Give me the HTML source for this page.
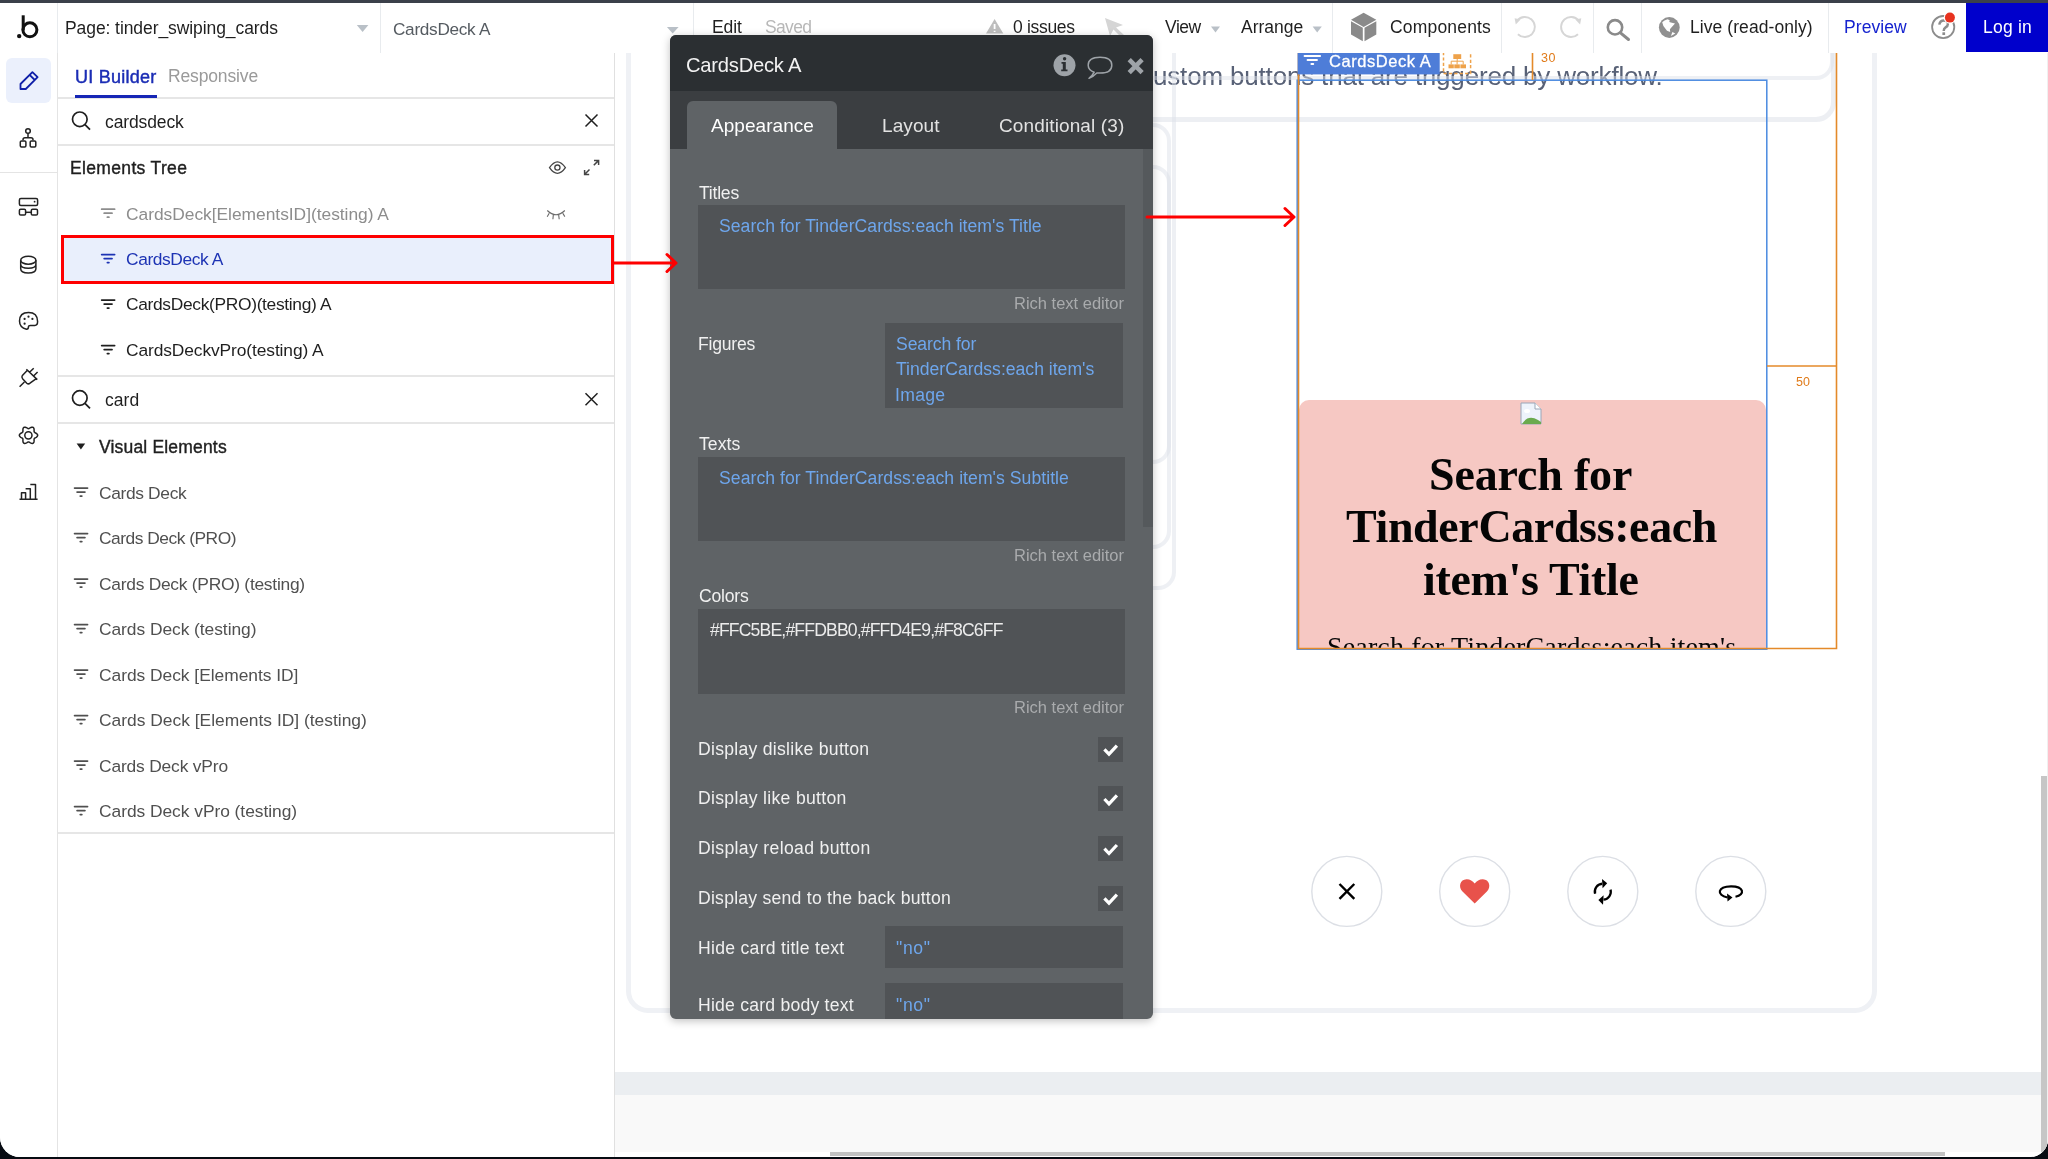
<!DOCTYPE html>
<html><head><meta charset="utf-8">
<style>
html,body{margin:0;padding:0;}
body{width:2048px;height:1159px;overflow:hidden;background:#070b12;position:relative;font-family:"Liberation Sans",sans-serif;}
.a{position:absolute;}
.t{position:absolute;white-space:pre;font-family:"Liberation Sans",sans-serif;will-change:transform;}
svg{position:absolute;left:0;top:0;overflow:visible;}
</style></head><body>
<div class="a" id="win" style="left:0;top:0;width:2048px;height:1157px;background:#fff;border-radius:0 0 18px 20px;overflow:hidden;">
  <!-- top dark strip -->
  <div class="a" style="left:0;top:0;width:2048px;height:3px;background:#3b404a;"></div>

  <!-- ============ CANVAS ============ -->
  <div class="a" style="left:615px;top:53px;width:1433px;height:1104px;background:#ffffff;overflow:hidden;">
   <div class="a" style="left:-615px;top:-53px;width:2048px;height:1159px;">
  <!-- big container -->
  <div class="a" style="left:626px;top:10px;width:1251px;height:1003px;box-sizing:border-box;border:5px solid #eff1f5;border-radius:22px;"></div>
  <!-- band & footer -->
  <div class="a" style="left:615px;top:1072px;width:1426px;height:23px;background:#ebeef1;"></div>
  <div class="a" style="left:615px;top:1095px;width:1426px;height:57px;background:#f9f9f9;"></div>
  <div class="a" style="left:830px;top:1152px;width:1115px;height:4px;background:#c2c2c2;"></div>
  <div class="a" style="left:2041px;top:776px;width:6px;height:376px;background:#c6c6c6;"></div>
  <div class="a" style="left:2047px;top:53px;width:1px;height:1104px;background:#f0f0f0;"></div>
<div class="t" style="left:1152.50px;top:63.00px;font-size:26px;line-height:26px;color:#586176;letter-spacing:-0.174px;">ustom buttons that are triggered by workflow.</div>
<div class="t" style="left:990.61px;top:63.00px;font-size:26px;line-height:26px;color:#586176;letter-spacing:0.000px;">You can use c</div>
  <!-- inner containers -->
  <div class="a" style="left:700px;top:-100px;width:1136px;height:222px;box-sizing:border-box;border:5px solid rgba(222,226,234,0.55);border-radius:20px;"></div>
  <div class="a" style="left:700px;top:-100px;width:1134px;height:179.5px;box-sizing:border-box;border:4px solid rgba(222,226,234,0.5);border-radius:18px;"></div>
  <div class="a" style="left:700px;top:20px;width:476px;height:570px;box-sizing:border-box;border:4px solid rgba(222,226,234,0.5);border-radius:18px;"></div>
  <div class="a" style="left:700px;top:123px;width:471px;height:341px;box-sizing:border-box;border:4px solid rgba(222,226,234,0.5);border-radius:18px;"></div>
  <div class="a" style="left:700px;top:165px;width:471px;height:384px;box-sizing:border-box;border:4px solid rgba(222,226,234,0.5);border-radius:18px;"></div>
   </div>
  </div>
  <!-- card -->
  <div class="a" style="left:1299px;top:400px;width:467px;height:249px;background:#f6c8c3;border-radius:10px 10px 0 0;overflow:hidden;">
  </div>
  <div class="a" style="left:1299px;top:400px;width:467px;height:249px;overflow:hidden;">
    <div class="a" style="left:-1299px;top:-400px;width:2048px;height:1159px;">
<div class="t" style="left:1429.20px;top:452.00px;font-size:46px;line-height:46px;color:#050505;letter-spacing:-0.167px;font-weight:700;font-family:'Liberation Serif',serif;">Search for</div>
<div class="t" style="left:1346.20px;top:504.00px;font-size:46px;line-height:46px;color:#050505;letter-spacing:-0.375px;font-weight:700;font-family:'Liberation Serif',serif;">TinderCardss:each</div>
<div class="t" style="left:1423.00px;top:557.00px;font-size:46px;line-height:46px;color:#050505;letter-spacing:-0.313px;font-weight:700;font-family:'Liberation Serif',serif;">item&#x27;s Title</div>
<div class="t" style="left:1326.80px;top:633.00px;font-size:28px;line-height:28px;color:#050505;letter-spacing:0.151px;font-family:'Liberation Serif',serif;">Search for TinderCardss:each item&#x27;s</div>
    </div>
  </div>
  <svg width="2048" height="1159">
    <!-- broken image icon -->
    <g transform="translate(1520,402)">
      <path d="M1,1 h14 l6,6 v15 h-20 z" fill="#eef3fb" stroke="#9aa6b8" stroke-width="1"/>
      <path d="M15,1 v6 h6" fill="#fff" stroke="#9aa6b8" stroke-width="1"/>
      <path d="M2,22 q6,-10 16,-4 l3,2 v2 z" fill="#6aaa4e"/>
      <ellipse cx="7" cy="9" rx="3" ry="2" fill="#fff"/>
    </g>
    <!-- selection & margin lines -->
    <rect x="1297.2" y="80.2" width="469.6" height="569" fill="none" stroke="#4a8ae0" stroke-width="1.5"/>
    <path d="M1298.5,53 V648.5 H1836.5 V40" fill="none" stroke="#e48a2a" stroke-width="1.6"/>
    <path d="M1767,366 H1836.5" fill="none" stroke="#e48a2a" stroke-width="1.6"/>
    <path d="M1532.5,53 V80" fill="none" stroke="#e48a2a" stroke-width="1.6"/>
    <path d="M1443.5,52 V73.6 H1470.6 V52" fill="none" stroke="#eea24a" stroke-width="1.5" stroke-dasharray="3.2,2.2"/>
    <g fill="#eea24a">
      <rect x="1453.3" y="54.2" width="7.9" height="4.8"/>
      <rect x="1448.5" y="64.4" width="5.3" height="3.9"/><rect x="1454.3" y="64.4" width="5.5" height="3.9"/><rect x="1460.4" y="64.4" width="5.6" height="3.9"/>
    </g>
    <path d="M1457.2,59 V61.2 M1451.2,64.4 V61.2 H1463.2 V64.4 M1457.1,61.2 V64.4" fill="none" stroke="#eea24a" stroke-width="1"/>
    <!-- label tab -->
    <rect x="1297.6" y="53" width="142.1" height="21.4" fill="#4e7dd8"/>
    <path d="M1304.58,56.10 H1320.06 M1307.58,60.10 H1316.94 M1311.42,64.10 H1313.22" stroke="#fff" stroke-width="2" stroke-linecap="round" fill="none"/>
    <!-- buttons -->
    <g fill="#fff" stroke="#dcdfe5" stroke-width="1.4">
      <circle cx="1346.8" cy="891.4" r="35"/>
      <circle cx="1474.7" cy="891.4" r="35"/>
      <circle cx="1602.8" cy="891.4" r="35"/>
      <circle cx="1730.8" cy="891.4" r="35"/>
    </g>
    <path d="M1339.5,884 L1354.3,898.8 M1354.3,884 L1339.5,898.8" stroke="#000" stroke-width="2.4"/>
    <path d="M1474.7,903.6 L1462.5,891.5 C1458,887 1460,879.5 1466.5,879.3 C1470,879.2 1472.5,881 1474.7,883.5 C1476.9,881 1479.4,879.2 1482.9,879.3 C1489.4,879.5 1491.4,887 1486.9,891.5 Z" fill="#e8524b"/>
    <g fill="none" stroke="#000" stroke-width="2.3">
      <path d="M1595.07,893.77 A8,8 0 0 1 1602.1,883.73"/>
      <path d="M1610.53,889.63 A8,8 0 0 1 1603.5,899.67"/>
    </g>
    <path d="M1607.2,883.3 L1602,878.9 L1602.6,888.2 Z" fill="#000"/>
    <path d="M1598.4,900.1 L1603.6,895.3 L1603.0,904.7 Z" fill="#000"/>
    <g fill="none" stroke="#000" stroke-width="2.2">
      <path d="M1727.5,897.5 C1716,895 1717.5,886.5 1731,886.3 C1744,886.2 1745.5,894.5 1735.5,896.8"/>
    </g>
    <path d="M1727,893.5 L1732.5,897.5 L1727.5,901.5 Z" fill="#000"/>
  </svg>
<div class="t" style="left:1328.80px;top:53.00px;font-size:16.5px;line-height:16.5px;color:#ffffff;letter-spacing:0.541px;-webkit-text-stroke:0.3px #fff;">CardsDeck A</div>
<div class="t" style="left:1540.50px;top:52.00px;font-size:12.5px;line-height:12.5px;color:#e07b1a;letter-spacing:0.548px;">30</div>
<div class="t" style="left:1796.00px;top:376.00px;font-size:12.5px;line-height:12.5px;color:#e07b1a;letter-spacing:0.048px;">50</div>

  <!-- ============ LEFT RAIL ============ -->
  <div class="a" style="left:0;top:53px;width:57px;height:1104px;background:#fff;border-right:1px solid #e4e4e4;"></div>
  <div class="a" style="left:0;top:172px;width:57px;height:1px;background:#e4e4e4;"></div>
  <div class="a" style="left:6px;top:58px;width:45px;height:45px;background:#ebf0fc;border-radius:6px;"></div>
  <svg width="60" height="520">
    <g fill="none" stroke="#0f1fa8" stroke-width="1.8" stroke-linejoin="round">
      <path d="M20.5,89 L20.5,84 L32.4,72.1 L37.6,77.2 L25.8,89 Z M29.6,74.8 L34.8,80"/>
    </g>
    <g fill="none" stroke="#222" stroke-width="1.5" stroke-linejoin="round">
      <circle cx="28" cy="131" r="2.3"/>
      <path d="M28,133.3 V137.7 M23,140.3 V139.7 Q23,137.7 25,137.7 H31 Q33,137.7 33,139.7 V140.3"/>
      <rect x="20.3" y="140.9" width="5.6" height="6" rx="1.2"/>
      <rect x="30.2" y="140.9" width="5.6" height="6" rx="1.2"/>
      <rect x="19.4" y="198.4" width="18.2" height="7.0" rx="1.5"/>
      <rect x="19.4" y="209.3" width="6.2" height="5.8" rx="1.3"/>
      <rect x="31.3" y="209.3" width="6.2" height="5.8" rx="1.3"/>
      <path d="M25.6,212.3 H31.3"/>
      <ellipse cx="28.3" cy="260.2" rx="7.6" ry="4"/>
      <path d="M20.7,260.2 V268.8 Q20.7,273 28.3,273 Q35.9,273 35.9,268.8 V260.2 M20.7,264.3 Q20.7,268.3 28.3,268.3 Q35.9,268.3 35.9,264.3"/>
      <path d="M33.2,325.4 H34.8 Q37.6,325.4 37.6,321.5 Q37.6,312.4 28.5,312.4 Q19.5,312.4 19.5,321 Q19.5,327.5 26.5,329.3 Q28.5,329.3 28.5,326.5 Q28.5,325.4 30.3,325.4 Z"/>
<path d="M26.4,369.2 L37.3,379.6 M27.4,370.2 L22.4,375.4 Q21.2,377.2 22.6,378.8 L26.8,383.2 Q28.4,384.6 30,383.2 L36.3,378.6 M29.8,372 L33.7,368.2 M33.8,375.8 L37.6,372 M24.4,382 L19.6,386.8"/>
<path d="M37.65,435.30 L37.58,435.78 L37.36,436.23 L37.03,436.65 L36.61,437.02 L36.13,437.34 L35.65,437.62 L35.19,437.87 L34.79,438.10 L34.48,438.35 L34.26,438.62 L34.13,438.96 L34.07,439.35 L34.07,439.81 L34.08,440.33 L34.09,440.89 L34.04,441.46 L33.93,442.01 L33.74,442.51 L33.45,442.92 L33.08,443.22 L32.63,443.40 L32.12,443.44 L31.59,443.36 L31.06,443.18 L30.54,442.93 L30.06,442.65 L29.62,442.38 L29.22,442.15 L28.85,442.00 L28.50,441.95 L28.15,442.00 L27.78,442.15 L27.38,442.38 L26.94,442.65 L26.46,442.93 L25.94,443.18 L25.41,443.36 L24.88,443.44 L24.37,443.40 L23.93,443.22 L23.55,442.92 L23.26,442.51 L23.07,442.01 L22.96,441.46 L22.91,440.89 L22.92,440.33 L22.93,439.81 L22.93,439.35 L22.87,438.96 L22.74,438.62 L22.52,438.35 L22.21,438.10 L21.81,437.87 L21.35,437.62 L20.87,437.34 L20.39,437.02 L19.97,436.65 L19.64,436.23 L19.42,435.78 L19.35,435.30 L19.42,434.82 L19.64,434.37 L19.97,433.95 L20.39,433.58 L20.87,433.26 L21.35,432.98 L21.81,432.73 L22.21,432.50 L22.52,432.25 L22.74,431.98 L22.87,431.64 L22.93,431.25 L22.93,430.79 L22.92,430.27 L22.91,429.71 L22.96,429.14 L23.07,428.59 L23.26,428.09 L23.55,427.68 L23.92,427.38 L24.37,427.20 L24.88,427.16 L25.41,427.24 L25.94,427.42 L26.46,427.67 L26.94,427.95 L27.38,428.22 L27.78,428.45 L28.15,428.60 L28.50,428.65 L28.85,428.60 L29.22,428.45 L29.62,428.22 L30.06,427.95 L30.54,427.67 L31.06,427.42 L31.59,427.24 L32.12,427.16 L32.63,427.20 L33.08,427.38 L33.45,427.68 L33.74,428.09 L33.93,428.59 L34.04,429.14 L34.09,429.71 L34.08,430.27 L34.07,430.79 L34.07,431.25 L34.13,431.64 L34.26,431.98 L34.48,432.25 L34.79,432.50 L35.19,432.73 L35.65,432.98 L36.13,433.26 L36.61,433.58 L37.03,433.95 L37.36,434.37 L37.58,434.82 L37.65,435.30 Z"/>
      <circle cx="28.4" cy="435.3" r="3.6"/>
      <path d="M19.5,499.3 H37.6 M21.5,499.3 V492.7 H25.6 V499.3 M25.6,488.8 H30.3 V499.3 M30.3,484.5 H35.5 V499.3"/>
    </g>
    <g fill="#222">
      <circle cx="24.6" cy="318.9" r="1.1"/><circle cx="28.5" cy="316.7" r="1.1"/><circle cx="32.4" cy="318.9" r="1.1"/><circle cx="24.6" cy="323.7" r="1.1"/>
      <circle cx="34.6" cy="201.7" r="0.9"/>
    </g>
  </svg>

  <!-- ============ LEFT PANEL ============ -->
  <div class="a" style="left:58px;top:53px;width:556px;height:1104px;background:#fff;border-right:1px solid #e0e0e0;"></div>
  <div class="a" style="left:58px;top:97px;width:556px;height:2px;background:#e6e6e6;"></div>
  <div class="a" style="left:75px;top:95px;width:82px;height:3px;background:#1626b5;"></div>
  <div class="a" style="left:58px;top:144px;width:556px;height:2px;background:#e6e6e6;"></div>
  <div class="a" style="left:58px;top:375px;width:556px;height:2px;background:#e6e6e6;"></div>
  <div class="a" style="left:58px;top:422px;width:556px;height:2px;background:#e6e6e6;"></div>
  <div class="a" style="left:58px;top:832px;width:556px;height:2px;background:#e6e6e6;"></div>
  <!-- selected row -->
  <div class="a" style="left:61px;top:235px;width:547px;height:43px;background:#e9effc;border:3px solid #fe0000;"></div>
  <svg width="620" height="840">
    <g fill="none" stroke="#1f1f1f" stroke-width="1.7">
      <circle cx="79.8" cy="119.3" r="7.3"/><path d="M85,124.6 L90,129.6"/>
      <path d="M585.5,114.5 L597.5,126.5 M597.5,114.5 L585.5,126.5" stroke-width="1.5"/>
      <circle cx="79.8" cy="398" r="7.3"/><path d="M85,403.3 L90,408.3"/>
      <path d="M585.5,393.2 L597.5,405.2 M597.5,393.2 L585.5,405.2" stroke-width="1.5"/>
    </g>
    <g fill="none" stroke="#444" stroke-width="1.3">
      <path d="M549.5,167.6 Q557.4,156 565.4,167.6 Q557.4,179 549.5,167.6 Z"/>
      <circle cx="557.4" cy="167.6" r="2.6"/>
      <path d="M589.5,169.5 L584.8,174.2 M584.6,170 V174.6 H589.2 M593.8,165.2 L598.4,160.6 M594,160.4 H598.6 V165" stroke-width="1.5"/>
    </g>
    <g fill="none" stroke="#6a6a6a" stroke-width="1.1">
      <path d="M547.3,210.5 Q556,219 564.8,210.5 M549.2,213.3 L547.2,216.8 M553.3,215.1 L552.9,219.3 M558.7,215.1 L559.2,219.3 M562.8,213.3 L564.8,216.6"/>
    </g>
    <path d="M76.6,443.4 H85.2 L80.9,449.4 Z" fill="#1f1f1f"/>
    <path d="M101.70,209.20 H114.60 M104.20,213.20 H112.00 M107.40,217.20 H108.90" stroke="#8d8d8d" stroke-width="1.8" stroke-linecap="round" fill="none"/>
    <path d="M101.70,254.60 H114.60 M104.20,258.60 H112.00 M107.40,262.60 H108.90" stroke="#1d33b4" stroke-width="1.8" stroke-linecap="round" fill="none"/>
    <path d="M101.70,300.10 H114.60 M104.20,304.10 H112.00 M107.40,308.10 H108.90" stroke="#1f1f1f" stroke-width="1.8" stroke-linecap="round" fill="none"/>
    <path d="M101.70,345.60 H114.60 M104.20,349.60 H112.00 M107.40,353.60 H108.90" stroke="#1f1f1f" stroke-width="1.8" stroke-linecap="round" fill="none"/>
    <path d="M74.60,488.10 H87.50 M77.10,492.10 H84.90 M80.30,496.10 H81.80" stroke="#505050" stroke-width="1.8" stroke-linecap="round" fill="none"/><path d="M74.60,533.60 H87.50 M77.10,537.60 H84.90 M80.30,541.60 H81.80" stroke="#505050" stroke-width="1.8" stroke-linecap="round" fill="none"/><path d="M74.60,579.10 H87.50 M77.10,583.10 H84.90 M80.30,587.10 H81.80" stroke="#505050" stroke-width="1.8" stroke-linecap="round" fill="none"/><path d="M74.60,624.60 H87.50 M77.10,628.60 H84.90 M80.30,632.60 H81.80" stroke="#505050" stroke-width="1.8" stroke-linecap="round" fill="none"/><path d="M74.60,670.10 H87.50 M77.10,674.10 H84.90 M80.30,678.10 H81.80" stroke="#505050" stroke-width="1.8" stroke-linecap="round" fill="none"/><path d="M74.60,715.60 H87.50 M77.10,719.60 H84.90 M80.30,723.60 H81.80" stroke="#505050" stroke-width="1.8" stroke-linecap="round" fill="none"/><path d="M74.60,761.10 H87.50 M77.10,765.10 H84.90 M80.30,769.10 H81.80" stroke="#505050" stroke-width="1.8" stroke-linecap="round" fill="none"/><path d="M74.60,806.60 H87.50 M77.10,810.60 H84.90 M80.30,814.60 H81.80" stroke="#505050" stroke-width="1.8" stroke-linecap="round" fill="none"/>
  </svg>
<div class="t" style="left:75.10px;top:68.00px;font-size:18.0px;line-height:18.0px;color:#1b2db5;letter-spacing:0.251px;-webkit-text-stroke:0.45px #1b2db5;">UI Builder</div>
<div class="t" style="left:168.30px;top:68.00px;font-size:17.5px;line-height:17.5px;color:#9a9a9a;letter-spacing:-0.145px;">Responsive</div>
<div class="t" style="left:104.80px;top:114.00px;font-size:17.5px;line-height:17.5px;color:#1f1f1f;letter-spacing:-0.114px;">cardsdeck</div>
<div class="t" style="left:69.80px;top:160.00px;font-size:17.5px;line-height:17.5px;color:#1f1f1f;letter-spacing:0.341px;-webkit-text-stroke:0.4px #1f1f1f;">Elements Tree</div>
<div class="t" style="left:126.10px;top:206.00px;font-size:17.4px;line-height:17.4px;color:#8d8d8d;letter-spacing:-0.029px;">CardsDeck[ElementsID](testing) A</div>
<div class="t" style="left:126.10px;top:251.00px;font-size:17.4px;line-height:17.4px;color:#1d33b4;letter-spacing:-0.424px;">CardsDeck A</div>
<div class="t" style="left:126.10px;top:296.00px;font-size:17.4px;line-height:17.4px;color:#1f1f1f;letter-spacing:-0.330px;">CardsDeck(PRO)(testing) A</div>
<div class="t" style="left:126.10px;top:342.00px;font-size:17.4px;line-height:17.4px;color:#1f1f1f;letter-spacing:-0.110px;">CardsDeckvPro(testing) A</div>
<div class="t" style="left:104.50px;top:392.00px;font-size:17.5px;line-height:17.5px;color:#1f1f1f;letter-spacing:0.063px;">card</div>
<div class="t" style="left:99.00px;top:439.00px;font-size:17.5px;line-height:17.5px;color:#1f1f1f;letter-spacing:0.178px;-webkit-text-stroke:0.4px #1f1f1f;">Visual Elements</div>
<div class="t" style="left:99.00px;top:485.00px;font-size:17.4px;line-height:17.4px;color:#505050;letter-spacing:-0.350px;">Cards Deck</div>
<div class="t" style="left:99.00px;top:530.00px;font-size:17.4px;line-height:17.4px;color:#505050;letter-spacing:-0.497px;">Cards Deck (PRO)</div>
<div class="t" style="left:99.00px;top:576.00px;font-size:17.4px;line-height:17.4px;color:#505050;letter-spacing:-0.260px;">Cards Deck (PRO) (testing)</div>
<div class="t" style="left:99.00px;top:621.00px;font-size:17.4px;line-height:17.4px;color:#505050;letter-spacing:-0.053px;">Cards Deck (testing)</div>
<div class="t" style="left:99.00px;top:667.00px;font-size:17.4px;line-height:17.4px;color:#505050;letter-spacing:-0.031px;">Cards Deck [Elements ID]</div>
<div class="t" style="left:99.00px;top:712.00px;font-size:17.4px;line-height:17.4px;color:#505050;letter-spacing:0.003px;">Cards Deck [Elements ID] (testing)</div>
<div class="t" style="left:99.00px;top:758.00px;font-size:17.4px;line-height:17.4px;color:#505050;letter-spacing:-0.169px;">Cards Deck vPro</div>
<div class="t" style="left:99.00px;top:803.00px;font-size:17.4px;line-height:17.4px;color:#505050;letter-spacing:-0.041px;">Cards Deck vPro (testing)</div>

  <!-- ============ TOP BAR ============ -->
  <div class="a" style="left:0;top:3px;width:2048px;height:50px;background:#fff;"></div>
  <div class="a" style="left:57px;top:3px;width:1px;height:50px;background:#e8ebee;"></div>
  <div class="a" style="left:380px;top:3px;width:1px;height:50px;background:#e8ebee;"></div>
  <div class="a" style="left:693px;top:3px;width:1px;height:50px;background:#e8ebee;"></div>
  <div class="a" style="left:1332px;top:3px;width:1px;height:50px;background:#e8ebee;"></div>
  <div class="a" style="left:1501px;top:3px;width:1px;height:50px;background:#e8ebee;"></div>
  <div class="a" style="left:1593px;top:3px;width:1px;height:50px;background:#e8ebee;"></div>
  <div class="a" style="left:1641px;top:3px;width:1px;height:50px;background:#e8ebee;"></div>
  <div class="a" style="left:1828px;top:3px;width:1px;height:50px;background:#e8ebee;"></div>
  <div class="a" style="left:1966px;top:3px;width:82px;height:49px;background:#0000cc;"></div>
  <svg width="2048" height="60">
    <!-- logo -->
    <g fill="#111">
      <circle cx="19.2" cy="36.1" r="2.2"/>
      <rect x="21.7" y="15.3" width="3" height="15"/>
    </g>
    <circle cx="29.9" cy="29.8" r="7" fill="none" stroke="#111" stroke-width="3"/>
    <g fill="#b9c0c7">
      <path d="M356.8,25 H368.4 L362.6,32 Z"/>
      <path d="M666.9,27 H678.6 L672.7,33.4 Z"/>
      <path d="M1211,26.5 H1220 L1215.5,32.5 Z"/>
      <path d="M1312.6,26.5 H1321.8 L1317.2,32.5 Z"/>
    </g>
    <!-- warning -->
    <path d="M994.6,19 L1003.3,33.6 H986 Z" fill="#bdbdbd"/>
    <path d="M994.6,24 V29 M994.6,30.8 V32" stroke="#fff" stroke-width="1.8"/>
    <!-- cursor -->
    <path d="M1105,18 L1123,25 L1116,27.5 L1124,35 L1121,37 L1113.5,29.5 L1110,36 Z" fill="#d5d5d5"/>
    <!-- cube -->
    <g>
      <path d="M1363.6,12.7 L1376.3,19.8 L1363.6,26.9 L1351,19.8 Z" fill="#8a8a8a"/>
      <path d="M1351,21.2 L1362.8,27.8 V41.3 L1351,34.6 Z" fill="#8a8a8a"/>
      <path d="M1376.3,21.2 L1364.5,27.8 V41.3 L1376.3,34.6 Z" fill="#8a8a8a"/>
    </g>
    <!-- undo / redo -->
    <g fill="none" stroke="#d6d6d6" stroke-width="1.9">
      <path d="M1517.9,34.2 A10,10 0 1 0 1517.3,20.4"/>
      <path d="M1578,34.2 A10,10 0 1 1 1578.6,20.4"/>
    </g>
    <path d="M1514.6,18.3 L1520.6,19.6 L1515.8,24.6 Z" fill="#d6d6d6"/>
    <path d="M1581.3,18.3 L1575.3,19.6 L1580.1,24.6 Z" fill="#d6d6d6"/>
    <!-- search -->
    <circle cx="1615" cy="27.3" r="7.2" fill="none" stroke="#8a8a8a" stroke-width="2.6"/>
    <path d="M1620.5,32.8 L1628.5,39.5" stroke="#8a8a8a" stroke-width="3" stroke-linecap="round"/>
    <!-- globe -->
    <circle cx="1669.3" cy="27.5" r="10.4" fill="#909090"/>
    <path d="M1662.2,22.2 L1664.5,20.6 L1667.5,19.3 L1669.7,20.3 L1669.3,22 L1670.9,22.6 L1675,23.4 L1671.6,27.3 L1669.9,29.2 L1670.2,31.9 L1667,30.7 L1663.4,26.1 Z M1672.4,31.9 L1675.3,33.6 L1670.9,35.9 Z" fill="#fff"/>
    <!-- help -->
    <circle cx="1943.2" cy="27.1" r="11.1" fill="none" stroke="#8c8c8c" stroke-width="1.8"/>
    <path d="M1939.3,24.6 Q1940,20.4 1943.9,20.4 Q1947.9,20.4 1947.9,23.9 Q1947.9,26 1945.6,27.4 Q1943.7,28.6 1943.7,31" fill="none" stroke="#8c8c8c" stroke-width="2.5"/>
    <rect x="1942.4" y="32.3" width="2.7" height="2.7" fill="#8c8c8c"/>
    <circle cx="1949.9" cy="17.6" r="6.2" fill="#fff"/>
    <circle cx="1949.9" cy="17.6" r="5" fill="#e8321f"/>
  </svg>
<div class="t" style="left:65.10px;top:20.00px;font-size:17.5px;line-height:17.5px;color:#1f1f1f;letter-spacing:-0.082px;">Page: tinder_swiping_cards</div>
<div class="t" style="left:393.20px;top:21.00px;font-size:17.2px;line-height:17.2px;color:#555b61;letter-spacing:-0.288px;">CardsDeck A</div>
<div class="t" style="left:712.20px;top:19.00px;font-size:17.5px;line-height:17.5px;color:#1f1f1f;letter-spacing:-0.098px;">Edit</div>
<div class="t" style="left:765.20px;top:19.00px;font-size:17.5px;line-height:17.5px;color:#b8b8b8;letter-spacing:-0.672px;">Saved</div>
<div class="t" style="left:1013.30px;top:19.00px;font-size:17.5px;line-height:17.5px;color:#1f1f1f;letter-spacing:-0.307px;">0 issues</div>
<div class="t" style="left:1165.00px;top:19.00px;font-size:17.5px;line-height:17.5px;color:#1f1f1f;letter-spacing:-0.459px;">View</div>
<div class="t" style="left:1241.20px;top:19.00px;font-size:17.5px;line-height:17.5px;color:#1f1f1f;letter-spacing:-0.004px;">Arrange</div>
<div class="t" style="left:1389.50px;top:19.00px;font-size:17.5px;line-height:17.5px;color:#1f1f1f;letter-spacing:0.181px;">Components</div>
<div class="t" style="left:1689.60px;top:19.00px;font-size:17.5px;line-height:17.5px;color:#1f1f1f;letter-spacing:0.070px;">Live (read-only)</div>
<div class="t" style="left:1844.00px;top:19.00px;font-size:17.5px;line-height:17.5px;color:#1523cf;letter-spacing:0.066px;">Preview</div>
<div class="t" style="left:1982.60px;top:19.00px;font-size:17.5px;line-height:17.5px;color:#ffffff;letter-spacing:0.210px;">Log in</div>

  <!-- ============ POPUP ============ -->
  <div class="a" style="left:670px;top:35px;width:483px;height:984px;background:#5f6366;border-radius:6px;overflow:hidden;box-shadow:0 2px 8px rgba(0,0,0,0.25);">
    <div class="a" style="left:0;top:0;width:483px;height:56px;background:#2b2f32;"></div>
    <div class="a" style="left:0;top:56px;width:483px;height:58px;background:#3b3e41;"></div>
    <div class="a" style="left:17px;top:66px;width:150px;height:48px;background:#5f6366;border-radius:6px 6px 0 0;"></div>
    <div class="a" style="left:473px;top:114px;width:10px;height:378px;background:#55595c;"></div>
    <div class="a" style="left:28px;top:170px;width:427px;height:84px;background:#505356;"></div>
    <div class="a" style="left:215px;top:288px;width:238px;height:85px;background:#505356;"></div>
    <div class="a" style="left:28px;top:422px;width:427px;height:84px;background:#505356;"></div>
    <div class="a" style="left:28px;top:574px;width:427px;height:85px;background:#505356;"></div>
    <div class="a" style="left:428px;top:702px;width:25px;height:25px;background:#505356;"></div>
    <div class="a" style="left:428px;top:751px;width:25px;height:25px;background:#505356;"></div>
    <div class="a" style="left:428px;top:801px;width:25px;height:25px;background:#505356;"></div>
    <div class="a" style="left:428px;top:851px;width:25px;height:25px;background:#505356;"></div>
    <div class="a" style="left:215px;top:891px;width:238px;height:42px;background:#505356;"></div>
    <div class="a" style="left:215px;top:948px;width:238px;height:40px;background:#505356;"></div>
  </div>
  <svg width="2048" height="1159">
    <g fill="none" stroke="#fff" stroke-width="3.2" stroke-linecap="butt" stroke-linejoin="miter">
      <path d="M1104.4,749.3 L1109,754.1 L1116.9,745.6"/>
      <path d="M1104.4,799.0 L1109,803.8 L1116.9,795.3"/>
      <path d="M1104.4,848.7 L1109,853.5 L1116.9,845.0"/>
      <path d="M1104.4,898.4 L1109,903.2 L1116.9,894.7"/>
    </g>
    <!-- header icons -->
    <circle cx="1064.5" cy="65.3" r="11" fill="#9ea3a8"/>
    <path d="M1061.5,62 H1065.8 V69.5 H1067.5 V71.2 H1061.2 V69.5 H1062.8 V63.7 H1061.5 Z" fill="#2b2f32"/>
    <circle cx="1064.6" cy="58.8" r="1.7" fill="#2b2f32"/>
<path d="M1094.2,72.2 Q1088.2,70 1088.2,65.2 Q1088.2,57.3 1100,57.3 Q1111.8,57.3 1111.8,65.2 Q1111.8,73.1 1100,73.1 Q1098.2,73.1 1096.8,72.9 Q1093,76.8 1089,78.3 Q1092.6,75.5 1094.2,72.2 Z" fill="none" stroke="#9ea3a8" stroke-width="1.5" stroke-linejoin="round"/>
    <path d="M1129.2,59.7 L1142.1,72.6 M1142.1,59.7 L1129.2,72.6" stroke="#9ea3a8" stroke-width="4.6"/>
    <!-- red arrows -->
    <g fill="none" stroke="#fe0000" stroke-width="3" stroke-linecap="round" stroke-linejoin="round">
      <path d="M614,263 H676 M667,254.5 L676,263 L667,271.5"/>
      <path d="M1147,217 H1294 M1285,208.5 L1294,217 L1285,225.5"/>
    </g>
  </svg>
<div class="t" style="left:686.20px;top:55.00px;font-size:20.2px;line-height:20.2px;color:#f2f2f2;letter-spacing:-0.235px;">CardsDeck A</div>
<div class="t" style="left:710.70px;top:116.00px;font-size:19.0px;line-height:19.0px;color:#ffffff;letter-spacing:0.044px;">Appearance</div>
<div class="t" style="left:882.00px;top:116.00px;font-size:19.0px;line-height:19.0px;color:#e2e2e2;letter-spacing:0.106px;">Layout</div>
<div class="t" style="left:999.00px;top:116.00px;font-size:19.0px;line-height:19.0px;color:#e2e2e2;letter-spacing:0.119px;">Conditional (3)</div>
<div class="t" style="left:698.80px;top:185.00px;font-size:17.6px;line-height:17.6px;color:#f0f0f0;letter-spacing:-0.237px;">Titles</div>
<div class="t" style="left:719.00px;top:218.00px;font-size:17.6px;line-height:17.6px;color:#6ea6ec;letter-spacing:0.037px;">Search for TinderCardss:each item&#x27;s Title</div>
<div class="t" style="left:1014.00px;top:295.00px;font-size:16.5px;line-height:16.5px;color:#a9abad;letter-spacing:-0.003px;">Rich text editor</div>
<div class="t" style="left:697.80px;top:336.00px;font-size:17.6px;line-height:17.6px;color:#f0f0f0;letter-spacing:-0.228px;">Figures</div>
<div class="t" style="left:896.40px;top:336.00px;font-size:17.6px;line-height:17.6px;color:#6ea6ec;letter-spacing:-0.101px;">Search for</div>
<div class="t" style="left:896.40px;top:361.00px;font-size:17.6px;line-height:17.6px;color:#6ea6ec;letter-spacing:-0.003px;">TinderCardss:each item&#x27;s</div>
<div class="t" style="left:895.40px;top:387.00px;font-size:17.6px;line-height:17.6px;color:#6ea6ec;letter-spacing:0.297px;">Image</div>
<div class="t" style="left:698.60px;top:436.00px;font-size:17.6px;line-height:17.6px;color:#f0f0f0;letter-spacing:0.034px;">Texts</div>
<div class="t" style="left:718.80px;top:470.00px;font-size:17.6px;line-height:17.6px;color:#6ea6ec;letter-spacing:0.053px;">Search for TinderCardss:each item&#x27;s Subtitle</div>
<div class="t" style="left:1014.00px;top:547.00px;font-size:16.5px;line-height:16.5px;color:#a9abad;letter-spacing:-0.003px;">Rich text editor</div>
<div class="t" style="left:698.60px;top:588.00px;font-size:17.6px;line-height:17.6px;color:#f0f0f0;letter-spacing:-0.209px;">Colors</div>
<div class="t" style="left:709.80px;top:622.00px;font-size:17.6px;line-height:17.6px;color:#ececec;letter-spacing:-0.843px;">#FFC5BE,#FFDBB0,#FFD4E9,#F8C6FF</div>
<div class="t" style="left:1014.00px;top:699.00px;font-size:16.5px;line-height:16.5px;color:#a9abad;letter-spacing:-0.003px;">Rich text editor</div>
<div class="t" style="left:697.70px;top:741.00px;font-size:17.6px;line-height:17.6px;color:#f0f0f0;letter-spacing:0.277px;">Display dislike button</div>
<div class="t" style="left:697.70px;top:790.00px;font-size:17.6px;line-height:17.6px;color:#f0f0f0;letter-spacing:0.312px;">Display like button</div>
<div class="t" style="left:697.70px;top:840.00px;font-size:17.6px;line-height:17.6px;color:#f0f0f0;letter-spacing:0.345px;">Display reload button</div>
<div class="t" style="left:697.70px;top:890.00px;font-size:17.6px;line-height:17.6px;color:#f0f0f0;letter-spacing:0.243px;">Display send to the back button</div>
<div class="t" style="left:697.70px;top:940.00px;font-size:17.6px;line-height:17.6px;color:#f0f0f0;letter-spacing:0.283px;">Hide card title text</div>
<div class="t" style="left:896.20px;top:940.00px;font-size:17.6px;line-height:17.6px;color:#6ea6ec;letter-spacing:0.662px;">&quot;no&quot;</div>
<div class="t" style="left:697.70px;top:997.00px;font-size:17.6px;line-height:17.6px;color:#f0f0f0;letter-spacing:0.223px;">Hide card body text</div>
<div class="t" style="left:896.20px;top:997.00px;font-size:17.6px;line-height:17.6px;color:#6ea6ec;letter-spacing:0.662px;">&quot;no&quot;</div>
</div>
</body></html>
